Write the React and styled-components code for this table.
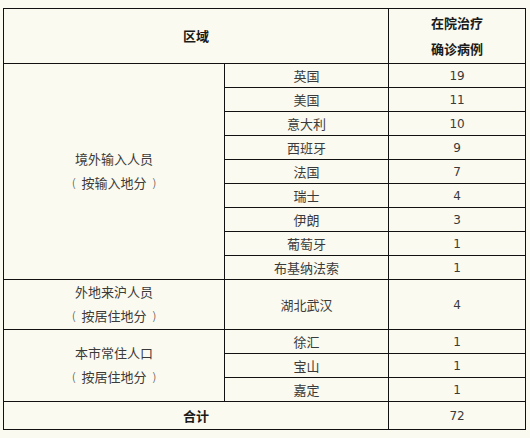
import React from 'react'
import styled, { createGlobalStyle } from 'styled-components'

const GlobalStyle = createGlobalStyle`
html, body {
  margin: 0;
  padding: 0;
  background: #fbfaf0;
}
`

const Page = styled.div`
padding: 8px 0 0 3px;
font-family: "Noto Sans CJK SC", sans-serif;
`

const Table = styled.table`
width: 522px;
border-collapse: collapse;
table-layout: fixed;
background: #fbfaf0;
`

const Row = styled.tr`
height: ${props => props.h}px;
`

const Cell = styled.td`
border: 1px solid #111;
padding: 0;
text-align: center;
vertical-align: middle;
color: ${props => (props.bold ? '#1a1a1a' : '#3a3a3a')};
font-weight: ${props => (props.bold ? 700 : 400)};
font-size: 13px;
line-height: ${props => props.lh || 16}px;
`

const Num = styled.span`
font-family: "DejaVu Sans", sans-serif;
font-size: 12px;
`

const Paren = styled.span`
font-family: "DejaVu Sans", sans-serif;
font-weight: 300;
margin: ${props => (props.right ? '0 0 0 5px' : '0 5px 0 0')};
`

const Group = ({ name, note }) => (
  <>
    {name}
    <br />
    <Paren>(</Paren>{note}<Paren right>)</Paren>
  </>
)

const abroad = [
  ['英国', 19],
  ['美国', 11],
  ['意大利', 10],
  ['西班牙', 9],
  ['法国', 7],
  ['瑞士', 4],
  ['伊朗', 3],
  ['葡萄牙', 1],
  ['布基纳法索', 1],
]

const local = [
  ['徐汇', 1],
  ['宝山', 1],
  ['嘉定', 1],
]

export default function App() {
  return (
    <Page>
      <GlobalStyle />
      <Table>
        <colgroup>
          <col style={{ width: 221 }} />
          <col style={{ width: 164 }} />
          <col style={{ width: 137 }} />
        </colgroup>
        <tbody>
          <Row h={55}>
            <Cell bold colSpan={2}>区域</Cell>
            <Cell bold lh={26}>在院治疗<br />确诊病例</Cell>
          </Row>
          {abroad.map((item, i) => (
            <Row h={24} key={item[0]}>
              {i === 0 && (
                <Cell rowSpan={abroad.length} lh={24}>
                  <Group name="境外输入人员" note="按输入地分" />
                </Cell>
              )}
              <Cell>{item[0]}</Cell>
              <Cell><Num>{item[1]}</Num></Cell>
            </Row>
          ))}
          <Row h={50}>
            <Cell lh={24}>
              <Group name="外地来沪人员" note="按居住地分" />
            </Cell>
            <Cell>湖北武汉</Cell>
            <Cell><Num>4</Num></Cell>
          </Row>
          {local.map((item, i) => (
            <Row h={24} key={item[0]}>
              {i === 0 && (
                <Cell rowSpan={local.length} lh={24}>
                  <Group name="本市常住人口" note="按居住地分" />
                </Cell>
              )}
              <Cell>{item[0]}</Cell>
              <Cell><Num>{item[1]}</Num></Cell>
            </Row>
          ))}
          <Row h={28}>
            <Cell bold colSpan={2}>合计</Cell>
            <Cell><Num>72</Num></Cell>
          </Row>
        </tbody>
      </Table>
    </Page>
  )
}
